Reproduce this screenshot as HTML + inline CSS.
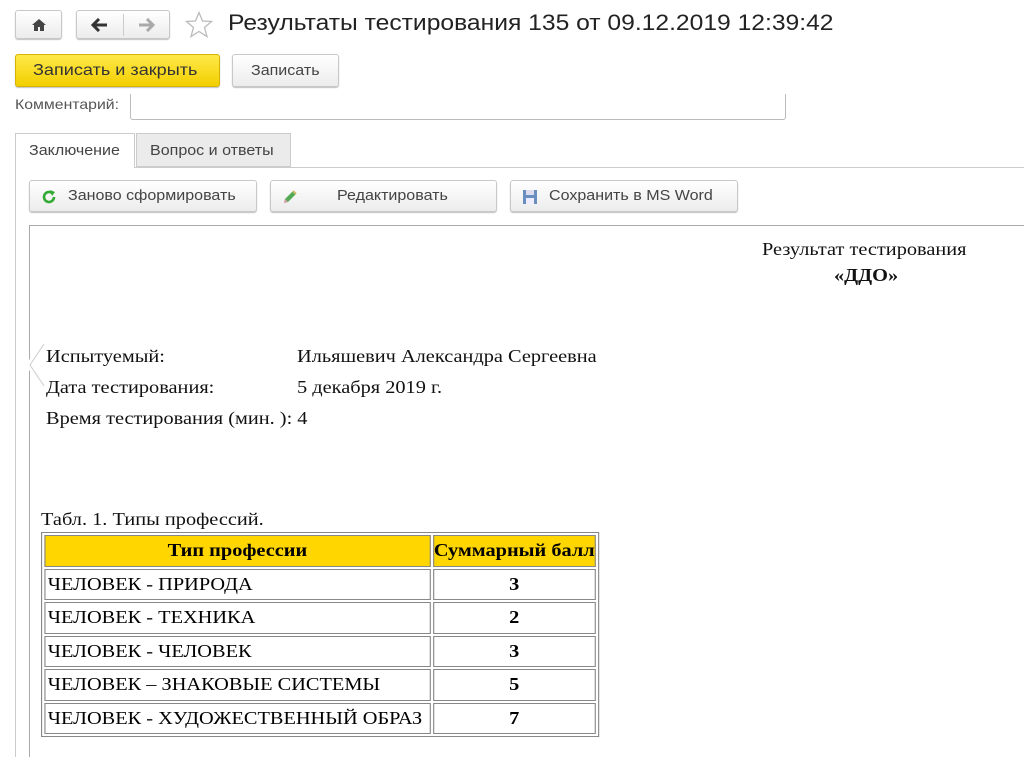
<!DOCTYPE html>
<html><head><meta charset="utf-8"><style>
body{margin:0;width:1024px;height:757px;background:#fff;position:relative;overflow:hidden;font-family:"Liberation Sans",sans-serif;}
.a{position:absolute}
.sx{transform:scaleX(1.13);transform-origin:left top;white-space:nowrap}
.sb{transform:scaleX(1.07);transform-origin:left top;white-space:nowrap}
.btn{position:absolute;border:1px solid #c8c8c8;border-radius:3px;background:linear-gradient(#fff,#ececec);box-shadow:0 1px 1px rgba(0,0,0,.25);box-sizing:border-box;color:#444;font-size:15px;}
.t{font-family:"Liberation Serif",serif;font-size:18px;color:#111;position:absolute;white-space:nowrap;transform:scaleX(1.13);transform-origin:left top}
table{border-collapse:separate;border-spacing:2px;border:1px solid #888;font-family:"Liberation Serif",serif;font-size:18px;transform:scaleX(1.13);transform-origin:left top}
td{border:1px solid #888;height:31.5px;padding:0 2px;box-sizing:border-box;white-space:nowrap}
</style></head><body>
<div class="btn" style="left:15px;top:10px;width:47px;height:29px"><svg class="a" style="left:15px;top:7px" width="16" height="14"><path d="M8 1 L1 7 H3 V13 H7 V9 H9 V13 H13 V7 H15 Z" fill="#444"/></svg></div>
<div class="btn" style="left:76px;top:10px;width:94px;height:29px"><div class="a" style="left:46px;top:3px;width:1px;height:22px;background:#ccc"></div>
<svg class="a" style="left:14px;top:7px" width="18" height="14"><path d="M2 7 H16 M8 1 L2 7 L8 13" stroke="#333" stroke-width="3" fill="none"/></svg>
<svg class="a" style="left:60px;top:7px" width="18" height="14"><path d="M2 7 H16 M10 1 L16 7 L10 13" stroke="#aaa" stroke-width="3" fill="none"/></svg></div>
<svg class="a" style="left:185px;top:11px" width="28" height="27"><path d="M14 1.5 L17.5 10 L26.5 10.5 L19.5 16.5 L22 25.5 L14 20.5 L6 25.5 L8.5 16.5 L1.5 10.5 L10.5 10 Z" fill="none" stroke="#bbb" stroke-width="1.3"/></svg>
<div class="a sx" style="left:228px;top:10px;font-size:22px;color:#222;transform:scaleX(1.12)">Результаты тестирования 135 от 09.12.2019 12:39:42</div>
<div class="btn" style="left:15px;top:54px;width:205px;height:33px;background:linear-gradient(#ffe94a,#f2cf00);border-color:#d4b400;color:#333;line-height:31px;font-size:16px"><span class="a sx" style="left:17px;top:0">Записать и закрыть</span></div>
<div class="btn" style="left:232px;top:54px;width:107px;height:33px;line-height:31px"><span class="a sb" style="left:18px;top:0">Записать</span></div>
<div class="a sx" style="left:15px;top:96px;font-size:14px;color:#555">Комментарий:</div>
<div class="a" style="left:130px;top:94px;width:654px;height:25px;border:1px solid #bbb;border-top:none;border-radius:0 0 3px 3px"></div>
<div class="a" style="left:15px;top:133px;width:120px;height:35px;border:1px solid #ccc;border-bottom:none;background:#fff;box-sizing:border-box;font-size:15px;color:#444;z-index:2"><span class="a sb" style="left:13px;top:8px">Заключение</span></div>
<div class="a" style="left:136px;top:133px;width:155px;height:34px;border:1px solid #ccc;background:#ebebeb;box-sizing:border-box;font-size:15px;color:#444"><span class="a sb" style="left:13px;top:8px">Вопрос и ответы</span></div>
<div class="a" style="left:15px;top:167px;width:1009px;height:1px;background:#ccc"></div>
<div class="a" style="left:15px;top:167px;width:1px;height:590px;background:#ccc"></div>
<div class="btn" style="left:29px;top:180px;width:228px;height:32px;line-height:30px"><svg class="a" style="left:11px;top:8px" width="16" height="16"><path d="M13 8 A5 5 0 1 1 11 4" stroke="#3a3" stroke-width="2.6" fill="none"/><path d="M9 1 L14 3 L11 7 Z" fill="#3a3"/></svg><span class="a sb" style="left:38px;top:0">Заново сформировать</span></div>
<div class="btn" style="left:270px;top:180px;width:227px;height:32px;line-height:30px"><svg class="a" style="left:10px;top:7px" width="18" height="18"><path d="M3 15 L4 11 L12 3 L15 6 L7 14 Z" fill="#5a5"/><path d="M3 15 L4 11 L7 14 Z" fill="#d9a"/><path d="M12 3 L15 6" stroke="#cb6" stroke-width="2"/></svg><span class="a sb" style="left:66px;top:0">Редактировать</span></div>
<div class="btn" style="left:510px;top:180px;width:228px;height:32px;line-height:30px"><svg class="a" style="left:11px;top:8px" width="16" height="16"><rect x="1" y="1" width="14" height="14" fill="#6a8ec0"/><rect x="4" y="1" width="8" height="5" fill="#dde"/><rect x="4" y="9" width="8" height="6" fill="#eef"/></svg><span class="a sb" style="left:38px;top:0">Сохранить в MS Word</span></div>
<div class="a" style="left:29px;top:225px;width:995px;height:1px;background:#aaa"></div>
<div class="a" style="left:29px;top:225px;width:1px;height:532px;background:#aaa"></div>
<div class="t" style="left:762px;top:239px">Результат тестирования</div>
<div class="t" style="left:834px;top:265px;font-weight:bold">«ДДО»</div>
<div class="t" style="left:46px;top:346px">Испытуемый:</div><div class="t" style="left:297px;top:346px">Ильяшевич Александра Сергеевна</div>
<div class="t" style="left:46px;top:377px">Дата тестирования:</div><div class="t" style="left:297px;top:377px">5 декабря 2019 г.</div>
<div class="t" style="left:46px;top:408px">Время тестирования (мин. ): 4</div>
<svg class="a" style="left:24px;top:340px" width="26" height="50"><path d="M20 4 L6 25 L20 46" stroke="#fff" stroke-width="7" fill="none"/><path d="M20 4 L6 25 L20 46" stroke="#ccc" stroke-width="1" fill="none"/></svg>
<div class="t" style="left:41px;top:509px">Табл. 1. Типы профессий.</div>
<table class="a" style="left:41px;top:532px;width:494px">
<tr><td style="background:#ffd600;text-align:center;font-weight:bold;width:342px">Тип профессии</td><td style="background:#ffd600;font-weight:bold;text-align:center;padding:0">Суммарный балл</td></tr>
<tr><td>ЧЕЛОВЕК - ПРИРОДА</td><td style="text-align:center;font-weight:bold">3</td></tr>
<tr><td>ЧЕЛОВЕК - ТЕХНИКА</td><td style="text-align:center;font-weight:bold">2</td></tr>
<tr><td>ЧЕЛОВЕК - ЧЕЛОВЕК</td><td style="text-align:center;font-weight:bold">3</td></tr>
<tr><td>ЧЕЛОВЕК – ЗНАКОВЫЕ СИСТЕМЫ</td><td style="text-align:center;font-weight:bold">5</td></tr>
<tr><td>ЧЕЛОВЕК - ХУДОЖЕСТВЕННЫЙ ОБРАЗ</td><td style="text-align:center;font-weight:bold">7</td></tr>
</table>
</body></html>
